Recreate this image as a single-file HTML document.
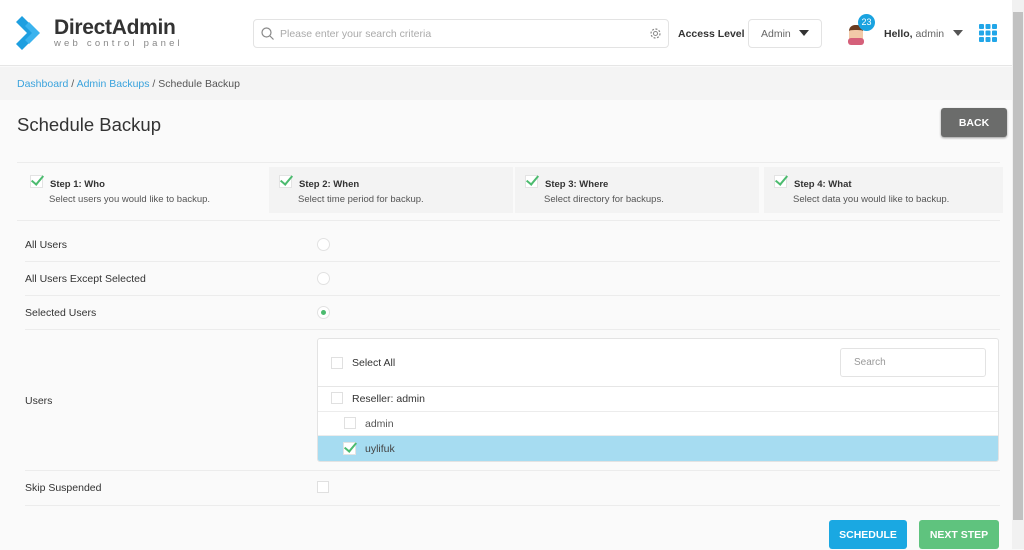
<!DOCTYPE html>
<html><head><style>
*{box-sizing:border-box;margin:0;padding:0}
body{width:1024px;height:549px;overflow:hidden;font-family:"Liberation Sans",sans-serif;background:#fafafa;position:relative;color:#333}
.a{position:absolute}
.hdr{left:0;top:0;width:1012px;height:66px;background:#fff;border-bottom:1px solid #e6e6e6}
.bc{left:0;top:67px;width:1012px;height:33px;background:#f4f4f4}
.line{height:1px;background:#ececec}
.step{top:167px;height:46px;width:244px;font-size:9.5px}
.step b{position:absolute;left:30px;top:12px;font-size:9.5px;color:#333}
.step span{position:absolute;left:29px;top:27px;color:#555}
.ck{position:absolute;left:10px;top:8px;width:13px;height:13px;border:1px solid #e3e3e3;background:#fff}
.ck:after{content:"";position:absolute;left:3px;top:-3px;width:5px;height:10px;border:solid #4cbb6f;border-width:0 2.5px 2.5px 0;transform:rotate(40deg)}
.lbl{left:25px;font-size:10.5px;color:#333}
.rad{width:13px;height:13px;border:1px solid #e2e2e2;border-radius:50%;background:#fff;left:317px}
.box{width:12px;height:12px;border:1px solid #e0e0e0;background:#fff}
.btn{color:#fff;font-weight:bold;font-size:10.5px;text-align:center;border-radius:3px}
</style></head><body>
<div class="a hdr"></div>
<svg class="a" style="left:16px;top:16px" width="32" height="34" viewBox="0 0 32 34"><path d="M6 0 L23 17 L6 34 L0 28 L11 17 L0 6Z" fill="#1e9fe0"/><path d="M13 6 L24 17 L13 28 L9 24 L16 17 L9 10Z" fill="#3bb3ee"/></svg>
<div class="a" style="left:54px;top:16px;font-size:21px;font-weight:bold;color:#333;letter-spacing:-.3px">DirectAdmin</div>
<div class="a" style="left:54px;top:38px;font-size:9.5px;color:#888;letter-spacing:3.2px">web control panel</div>
<div class="a" style="left:253px;top:19px;width:416px;height:29px;border:1px solid #e3e3e3;border-radius:4px;background:#fff"></div>
<svg class="a" style="left:261px;top:27px" width="13" height="13"><circle cx="5.5" cy="5.5" r="4.5" fill="none" stroke="#888" stroke-width="1.2"/><path d="M9 9l3.5 3.5" stroke="#888" stroke-width="1.2"/></svg>
<div class="a" style="left:280px;top:28px;font-size:10.5px;color:#aaa">Please enter your search criteria</div>
<svg class="a" style="left:649px;top:27px" width="13" height="13"><circle cx="6.5" cy="6.5" r="4.5" fill="none" stroke="#888" stroke-width="1.2" stroke-dasharray="2 1.5"/><circle cx="6.5" cy="6.5" r="2" fill="none" stroke="#888"/></svg>
<div class="a" style="left:678px;top:28px;font-size:10.5px;font-weight:bold">Access Level</div>
<div class="a" style="left:748px;top:19px;width:74px;height:29px;border:1px solid #e3e3e3;border-radius:4px;background:#fff"></div>
<div class="a" style="left:761px;top:28px;font-size:10.5px;color:#666">Admin</div>
<div class="a" style="left:799px;top:30px;border:5px solid transparent;border-top:6px solid #333"></div>
<div class="a" style="left:849px;top:25px;width:14px;height:18px;background:#f2c9a8;border-radius:6px 6px 3px 3px;border-top:5px solid #6a3b20"></div>
<div class="a" style="left:848px;top:38px;width:16px;height:7px;background:#d5607a;border-radius:3px"></div>
<div class="a" style="left:858px;top:14px;width:17px;height:17px;border-radius:50%;background:#1aa3e0;color:#fff;font-size:9px;text-align:center;line-height:17px">23</div>
<div class="a" style="left:884px;top:28px;font-size:10.5px"><b>Hello,</b> <span style="color:#666">admin</span></div>
<div class="a" style="left:953px;top:30px;border:5px solid transparent;border-top:6px solid #555"></div>
<svg class="a" style="left:979px;top:24px" width="18" height="18"><g fill="#21a6e8"><rect x="0" y="0" width="5" height="5" rx="1"/><rect x="6.5" y="0" width="5" height="5" rx="1"/><rect x="13" y="0" width="5" height="5" rx="1"/><rect x="0" y="6.5" width="5" height="5" rx="1"/><rect x="6.5" y="6.5" width="5" height="5" rx="1"/><rect x="13" y="6.5" width="5" height="5" rx="1"/><rect x="0" y="13" width="5" height="5" rx="1"/><rect x="6.5" y="13" width="5" height="5" rx="1"/><rect x="13" y="13" width="5" height="5" rx="1"/></g></svg>
<div class="a" style="left:1012px;top:0;width:12px;height:549px;background:#f1f1f1"></div>
<div class="a" style="left:1013px;top:12px;width:10px;height:508px;background:#c1c1c1"></div>
<div class="a bc"></div>
<div class="a" style="left:17px;top:78px;font-size:10.5px;color:#555"><span style="color:#3aa3dd">Dashboard</span> / <span style="color:#3aa3dd">Admin Backups</span> / Schedule Backup</div>
<div class="a" style="left:17px;top:114px;font-size:18.5px;color:#333">Schedule Backup</div>
<div class="a btn" style="left:941px;top:108px;width:66px;height:29px;background:#6b6c6b;line-height:30px;box-shadow:0 1px 2px #999">BACK</div>
<div class="a line" style="left:17px;top:162px;width:983px"></div>
<div class="a step" style="left:20px;background:#fafafa"><i class="ck"></i><b>Step 1: Who</b><span>Select users you would like to backup.</span></div>
<div class="a step" style="left:269px;background:#f3f3f3"><i class="ck"></i><b>Step 2: When</b><span>Select time period for backup.</span></div>
<div class="a step" style="left:515px;background:#f3f3f3"><i class="ck"></i><b>Step 3: Where</b><span>Select directory for backups.</span></div>
<div class="a step" style="left:764px;background:#f3f3f3;width:239px"><i class="ck"></i><b>Step 4: What</b><span>Select data you would like to backup.</span></div>
<div class="a line" style="left:17px;top:220px;width:983px"></div>
<div class="a lbl" style="top:239px">All Users</div>
<div class="a rad" style="top:238px"></div>
<div class="a line" style="left:25px;top:261px;width:975px"></div>
<div class="a lbl" style="top:273px">All Users Except Selected</div>
<div class="a rad" style="top:272px"></div>
<div class="a line" style="left:25px;top:295px;width:975px"></div>
<div class="a lbl" style="top:307px">Selected Users</div>
<div class="a rad" style="top:306px"><div class="a" style="left:3px;top:3px;width:5px;height:5px;border-radius:50%;background:#4cbb6f"></div></div>
<div class="a line" style="left:25px;top:329px;width:975px"></div>
<div class="a lbl" style="top:395px">Users</div>
<div class="a" style="left:317px;top:338px;width:682px;height:124px;border:1px solid #e3e3e3;border-radius:3px;background:#fff;overflow:hidden">
<div class="a box" style="left:13px;top:18px"></div>
<div class="a" style="left:34px;top:18px;font-size:10.5px">Select All</div>
<div class="a" style="left:522px;top:9px;width:146px;height:29px;border:1px solid #e3e3e3;border-radius:3px"></div>
<div class="a" style="left:536px;top:18px;font-size:10px;color:#999">Search</div>
<div class="a line" style="left:0;top:47px;width:682px;background:#e6e6e6"></div>
<div class="a box" style="left:13px;top:53px"></div>
<div class="a" style="left:34px;top:54px;font-size:10.5px">Reseller: admin</div>
<div class="a line" style="left:0;top:72px;width:682px"></div>
<div class="a box" style="left:26px;top:78px"></div>
<div class="a" style="left:47px;top:79px;font-size:10.5px;color:#555">admin</div>
<div class="a line" style="left:0;top:96px;width:682px"></div>
<div class="a" style="left:0;top:97px;width:682px;height:25px;background:#a6dcf1"></div>
<i class="ck" style="left:25px;top:103px;width:13px;height:13px"></i>
<div class="a" style="left:47px;top:104px;font-size:10.5px;color:#444">uylifuk</div>
</div>
<div class="a line" style="left:25px;top:470px;width:975px"></div>
<div class="a lbl" style="top:482px">Skip Suspended</div>
<div class="a box" style="left:317px;top:481px"></div>
<div class="a line" style="left:25px;top:505px;width:975px"></div>
<div class="a btn" style="left:829px;top:520px;width:78px;height:29px;background:#1aa8e2;line-height:30px">SCHEDULE</div>
<div class="a btn" style="left:919px;top:520px;width:80px;height:29px;background:#5fc37e;line-height:30px">NEXT STEP</div>
</body></html>
